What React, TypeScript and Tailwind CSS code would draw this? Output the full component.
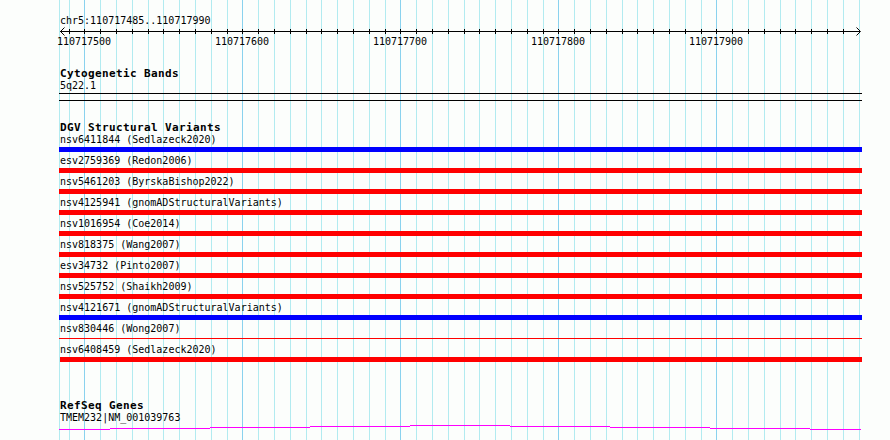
import React from 'react';

interface Variant {
  id: string;
  source: string;
  color: 'blue' | 'red' | 'thin';
  inset?: boolean;
}

const VARIANTS: Variant[] = [
  { id: 'nsv6411844', source: 'Sedlazeck2020', color: 'blue' },
  { id: 'esv2759369', source: 'Redon2006', color: 'red' },
  { id: 'nsv5461203', source: 'ByrskaBishop2022', color: 'red' },
  { id: 'nsv4125941', source: 'gnomADStructuralVariants', color: 'red' },
  { id: 'nsv1016954', source: 'Coe2014', color: 'red' },
  { id: 'nsv818375', source: 'Wang2007', color: 'red' },
  { id: 'esv34732', source: 'Pinto2007', color: 'red' },
  { id: 'nsv525752', source: 'Shaikh2009', color: 'red' },
  { id: 'nsv4121671', source: 'gnomADStructuralVariants', color: 'blue' },
  { id: 'nsv830446', source: 'Wong2007', color: 'thin' },
  { id: 'nsv6408459', source: 'Sedlazeck2020', color: 'red', inset: true },
];

const MAJOR_LABELS = ['110717500', '110717600', '110717700', '110717800', '110717900'];

// grid every 10bp, 1.58px per bp, 110717500 sits at x=84.3
const GRID = Array.from({ length: 51 }, (_, i) => i - 1).map(k => ({
  x: Math.round(84.3 + 15.8 * k),
  major: k % 10 === 0,
}));

// intron line of the gene, drawn as 100px steps
const INTRON = [
  [59, 110, 6], [110, 210, 5], [210, 310, 4], [310, 410, 3], [410, 510, 2],
  [510, 610, 3], [610, 710, 4], [710, 810, 5], [810, 861, 6],
];

function Grid() {
  return (
    <svg className="absolute inset-0" width={890} height={440} shapeRendering="crispEdges">
      <rect x={59} y={0} width={1} height={440} fill="#b2ebf0" />
      {GRID.map(g => (
        <rect key={g.x} x={g.x} y={0} width={1} height={440} fill={g.major ? '#8ad2ee' : '#b2ebf0'} />
      ))}
      {/* ruler */}
      <rect x={60} y={31} width={800} height={1} fill="#000" />
      {GRID.slice(0, -1).map(g => (
        <rect key={'t' + g.x} x={g.x} y={29} width={1} height={5} fill="#000" />
      ))}
      <path d="M64.5 27.5 L60.5 31.5 L64.5 35.5" stroke="#000" fill="none" shapeRendering="auto" />
      <path d="M856.5 27.5 L860.5 31.5 L856.5 35.5" stroke="#000" fill="none" shapeRendering="auto" />
    </svg>
  );
}

export default function App() {
  return (
    <div className="relative w-[890px] h-[440px] overflow-hidden bg-[#fcfefc] text-black font-['DejaVu_Sans_Mono',monospace] text-[10px] leading-[10px]">
      <Grid />

      <div className="relative pt-[16px]">
        <div className="pl-[60px] h-[10px]">chr5:110717485..110717990</div>

        {/* ruler labels */}
        <div className="flex ml-[5px] mt-[11px] h-[10px]">
          {MAJOR_LABELS.map(l => (
            <div key={l} className="w-[158px] text-center">{l}</div>
          ))}
        </div>

        <div className="ml-[59px] w-[803px]">
          {/* Cytogenetic Bands */}
          <div className="mt-[21px] pl-px h-[11px] text-[11px] leading-[11px] font-bold tracking-[0.38px]">Cytogenetic Bands</div>
          <div className="mt-[2px] pl-px h-[10px]">5q22.1</div>
          <div className="mt-[2px] h-px bg-black" />
          <div className="mt-[6px] h-px bg-black" />

          {/* DGV */}
          <div className="mt-[21px] pl-px h-[11px] text-[11px] leading-[11px] font-bold tracking-[0.38px]">DGV Structural Variants</div>
          <div className="mt-[2px]">
            {VARIANTS.map(v => (
              <div key={v.id} className="h-[21px]">
                <div className="pl-px h-[10px] whitespace-pre">{v.id} ({v.source})</div>
                {v.color === 'thin' ? (
                  <div className="mt-[2px] h-[5px] flex items-center">
                    <div className="h-px w-full bg-[#ff0000]" />
                  </div>
                ) : (
                  <div className={`mt-[2px] h-[5px] ${v.color === 'blue' ? 'bg-[#0000ff]' : 'bg-[#ff0000]'} ${v.inset ? 'ml-px' : ''}`} />
                )}
              </div>
            ))}
          </div>

          {/* RefSeq */}
          <div className="mt-[34px] pl-px h-[11px] text-[11px] leading-[11px] font-bold tracking-[0.38px]">RefSeq Genes</div>
          <div className="mt-[2px] pl-px h-[10px]">TMEM232|NM_001039763</div>
        </div>
        <svg width={890} height={10} className="block" shapeRendering="crispEdges">
          {INTRON.map(([a, b, y]) => (
            <rect key={a} x={a} y={y} width={b - a} height={1} fill="#ff00ff" />
          ))}
        </svg>
      </div>
    </div>
  );
}
